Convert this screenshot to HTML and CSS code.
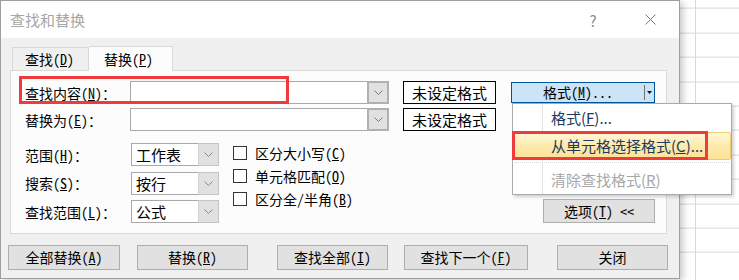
FILE: index.html
```html
<!DOCTYPE html>
<html lang="zh-CN">
<head>
<meta charset="utf-8">
<title>查找和替换</title>
<link rel="stylesheet" href="styles.css">
</head>
<body>
<div class="dialog">
  <div class="titlebar">
    <span class="title">查找和替换</span>
    <span class="help">?</span>
    <span class="close"><svg width="11" height="11" viewBox="0 0 11 11"><path d="M0.5 0.5 L10.5 10.5 M10.5 0.5 L0.5 10.5" stroke="#7a7a7a" stroke-width="1" fill="none"/></svg></span>
  </div>
  <div class="content">
    <div class="tabs">
      <div class="tab">查找(<u>D</u>)</div>
      <div class="tab active">替换(<u>P</u>)</div>
    </div>
    <div class="panel">
      <div class="row">
        <span class="label">查找内容(<u>N</u>)：</span>
        <div class="combo wide"><span class="combo-text"></span><span class="arrow"><svg width="9" height="5" viewBox="0 0 9 5"><path d="M0.5 0.5 L4.5 4.5 L8.5 0.5" stroke="#7a7a7a" fill="none"/></svg></span></div>
        <div class="fmt-btn">未设定格式</div>
        <div class="split">
          <span class="split-main">格式(<u>M</u>)...</span>
          <span class="split-sep"></span>
          <span class="split-arrow"><svg width="5" height="3" viewBox="0 0 5 3"><path d="M0 0 H5 L2.5 3 Z" fill="#111"/></svg></span>
        </div>
      </div>
      <div class="row row-2">
        <span class="label">替换为(<u>E</u>)：</span>
        <div class="combo wide"><span class="combo-text"></span><span class="arrow"><svg width="9" height="5" viewBox="0 0 9 5"><path d="M0.5 0.5 L4.5 4.5 L8.5 0.5" stroke="#7a7a7a" fill="none"/></svg></span></div>
        <div class="fmt-btn">未设定格式</div>
      </div>
      <div class="options">
        <div class="opt-col">
          <div class="opt-row">
            <span class="label opt-label">范围(<u>H</u>)：</span>
            <div class="combo small"><span class="combo-text">工作表</span><span class="arrow"><svg width="9" height="5" viewBox="0 0 9 5"><path d="M0.5 0.5 L4.5 4.5 L8.5 0.5" stroke="#8a8a8a" fill="none"/></svg></span></div>
          </div>
          <div class="opt-row">
            <span class="label opt-label">搜索(<u>S</u>)：</span>
            <div class="combo small"><span class="combo-text">按行</span><span class="arrow"><svg width="9" height="5" viewBox="0 0 9 5"><path d="M0.5 0.5 L4.5 4.5 L8.5 0.5" stroke="#8a8a8a" fill="none"/></svg></span></div>
          </div>
          <div class="opt-row">
            <span class="label opt-label">查找范围(<u>L</u>)：</span>
            <div class="combo small"><span class="combo-text">公式</span><span class="arrow"><svg width="9" height="5" viewBox="0 0 9 5"><path d="M0.5 0.5 L4.5 4.5 L8.5 0.5" stroke="#8a8a8a" fill="none"/></svg></span></div>
          </div>
        </div>
        <div class="checks">
          <div class="check"><span class="box"></span><span>区分大小写(<u>C</u>)</span></div>
          <div class="check"><span class="box"></span><span>单元格匹配(<u>O</u>)</span></div>
          <div class="check"><span class="box"></span><span>区分全/半角(<u>B</u>)</span></div>
        </div>
        <div class="btn opt-btn">选项(<u>T</u>) &lt;&lt;</div>
      </div>
    </div>
    <div class="actions">
      <div class="btn act act-1">全部替换(<u>A</u>)</div>
      <div class="btn act act-2">替换(<u>R</u>)</div>
      <div class="btn act act-3">查找全部(<u>I</u>)</div>
      <div class="btn act act-4">查找下一个(<u>F</u>)</div>
      <div class="btn act act-5">关闭</div>
    </div>
  </div>
</div>

<div class="menu">
  <div class="menu-item">格式(<u>F</u>)...</div>
  <div class="menu-item hot">从单元格选择格式(<u>C</u>)...</div>
  <div class="menu-sep"></div>
  <div class="menu-item disabled">清除查找格式(<u>R</u>)</div>
</div>

<div class="mark mark-find"></div>
<div class="mark mark-item"></div>
</body>
</html>
```

FILE: styles.css
```css
html, body {
  margin: 0;
  padding: 0;
  width: 739px;
  height: 280px;
  overflow: hidden;
}

body {
  position: relative;
  background-color: #ffffff;
  background-image:
    linear-gradient(to right, transparent 695px, #d9d9d9 695px, #d9d9d9 696px, transparent 696px),
    repeating-linear-gradient(to bottom, transparent 0, transparent 23.4px, #d9d9d9 23.4px, #d9d9d9 24.4px);
  background-position: 0 0, 0 -15.4px;
  font-family: "Noto Sans Mono CJK SC", "Noto Sans CJK SC", sans-serif;
  color: #000;
}

u {
  text-decoration: underline;
  text-underline-offset: 1px;
}

/* ---------- dialog ---------- */
.dialog {
  width: 680px;
  height: 279px;
  box-sizing: border-box;
  border: 1px solid #9e9e9e;
  background: #f0f0f0;
  box-shadow: 3px 2px 7px rgba(0, 0, 0, 0.22);
  display: flex;
  flex-direction: column;
}

.titlebar {
  height: 37px;
  flex: none;
  background: #ffffff;
  display: flex;
  align-items: center;
  padding: 0 18px 0 9px;
}

.title {
  font-family: "Noto Sans CJK SC", sans-serif;
  font-size: 15px;
  color: #a6a6a6;
  line-height: 20px;
  margin-top: 1px;
}

.help {
  margin-left: auto;
  width: 14px;
  text-align: center;
  font-family: "Noto Sans CJK SC", sans-serif;
  font-size: 15px;
  color: #8c8c8c;
  margin-right: 39px;
  margin-top: 1px;
}

.close {
  width: 22px;
  height: 11px;
  display: flex;
  justify-content: center;
}

.content {
  flex: 1;
  padding: 8px 0 0 0;
}

/* ---------- tabs ---------- */
.tabs {
  display: flex;
  align-items: flex-end;
  height: 24px;
  padding-left: 11px;
}

.tab {
  box-sizing: border-box;
  height: 23px;
  width: 77px;
  border: 1px solid #d9d9d9;
  border-bottom: none;
  font-size: 14px;
  line-height: 22px;
  padding-left: 12px;
  background: #f0f0f0;
}

.tab.active {
  height: 25px;
  width: 84px;
  margin-bottom: -1px;
  position: relative;
  z-index: 1;
  background: #fcfcfc;
  padding-left: 15px;
  line-height: 24px;
  border-left: none;
}

/* ---------- panel ---------- */
.panel {
  box-sizing: border-box;
  margin-left: 9px;
  width: 657px;
  height: 164px;
  border: 1px solid #d9d9d9;
  background: #fcfcfc;
  padding: 10px 11px 0 14px;
}

.row {
  display: flex;
  align-items: center;
  height: 23px;
}

.row-2 {
  margin-top: 4px;
}

.label {
  width: 105px;
  flex: none;
  font-size: 14px;
  line-height: 20px;
  white-space: nowrap;
}

.opt-label {
  width: 106px;
}

.combo {
  box-sizing: border-box;
  display: flex;
  height: 23px;
  border: 1px solid #a9a9a9;
  background: #ffffff;
  flex: none;
}

.combo.wide {
  width: 259px;
}

.combo.small {
  width: 88px;
}

.combo-text {
  flex: 1;
  font-size: 15px;
  line-height: 21px;
  padding-left: 4px;
  white-space: nowrap;
}

.arrow {
  box-sizing: border-box;
  width: 21px;
  background: #e1e1e1;
  border: 1px solid #c4c4c4;
  margin: -1px -1px -1px 0;
  border-left: 1px solid #d0d0d0;
  display: flex;
  align-items: center;
  justify-content: center;
}

.combo.wide .arrow {
  width: 22px;
  border: 2px solid #b0b0b0;
  margin: -1px -1px -1px 0;
}

.fmt-btn {
  box-sizing: border-box;
  margin-left: 14px;
  width: 93px;
  height: 23px;
  border: 1px solid #000;
  background: #ffffff;
  font-size: 15px;
  line-height: 21px;
  text-align: center;
  flex: none;
}

.split {
  box-sizing: border-box;
  margin-left: 15px;
  width: 144px;
  height: 21px;
  border: 1px solid #005499;
  background: #cce4f7;
  display: flex;
  align-items: center;
  flex: none;
}

.split-main {
  flex: 1;
  text-align: center;
  font-size: 14px;
  line-height: 19px;
  white-space: nowrap;
}

.split-sep {
  width: 1px;
  height: 15px;
  background: #707070;
}

.split-arrow {
  width: 9px;
  display: flex;
  justify-content: center;
}

/* ---------- options ---------- */
.options {
  display: flex;
}

.opt-col {
  width: 194px;
  padding-top: 12px;
  flex: none;
}

.opt-row {
  display: flex;
  align-items: center;
  height: 23px;
  margin-bottom: 5.5px;
}

.checks {
  margin-left: 14px;
  padding-top: 10px;
}

.check {
  display: flex;
  align-items: center;
  height: 23px;
  font-size: 14px;
  line-height: 20px;
  white-space: nowrap;
}

.box {
  box-sizing: border-box;
  width: 14px;
  height: 14px;
  border: 1px solid #333333;
  background: #ffffff;
  margin-right: 8px;
  flex: none;
}

.btn {
  box-sizing: border-box;
  border: 1px solid #adadad;
  background: #e1e1e1;
  font-size: 14px;
  text-align: center;
  white-space: nowrap;
}

.opt-btn {
  margin-left: auto;
  margin-top: 68px;
  width: 112px;
  height: 24px;
  line-height: 22px;
  flex: none;
}

/* ---------- bottom buttons ---------- */
.actions {
  display: flex;
  margin-top: 11px;
  padding-left: 7px;
}

.act {
  height: 25px;
  line-height: 23px;
  width: 111px;
}

.act-1 { width: 112px; }
.act-2 { margin-left: 17px; }
.act-3 { margin-left: 29px; }
.act-4 { margin-left: 16px; width: 124px; }
.act-5 { margin-left: 29px; }

/* ---------- dropdown menu ---------- */
.menu {
  position: absolute;
  left: 512px;
  top: 103px;
  width: 220px;
  height: 92px;
  box-sizing: border-box;
  border: 1px solid #a7abb0;
  background: #ffffff;
  box-shadow: 2px 2px 3px rgba(0, 0, 0, 0.18);
  font-family: "Noto Sans CJK SC", sans-serif;
  font-size: 15px;
  color: #1e395b;
  z-index: 5;
}

.menu::before {
  content: "";
  position: absolute;
  left: 29px;
  top: 0;
  bottom: 0;
  width: 1px;
  background: #e2e3e3;
}

.menu-item {
  position: relative;
  height: 28px;
  line-height: 28px;
  padding-left: 38px;
  box-sizing: border-box;
  white-space: nowrap;
}

.menu-item.hot {
  background: linear-gradient(to bottom, #fef7d9 0%, #fdebb0 45%, #fce294 100%);
  border: 1px solid #eccb73;
  border-radius: 2px;
  line-height: 26px;
  padding-left: 37px;
  margin-right: 0;
}

.menu-sep {
  height: 2px;
  margin: 0 2px 4px 2px;
  border-bottom: 1px dotted #d8d8d8;
}

.menu-item.disabled {
  color: #a7a7a7;
  height: 26px;
  line-height: 26px;
}

/* ---------- red annotation boxes ---------- */
.mark {
  position: absolute;
  box-sizing: border-box;
  border: 3px solid #ef3b3b;
  z-index: 10;
}

.mark-find {
  left: 19px;
  top: 76px;
  width: 270px;
  height: 28px;
}

.mark-item {
  left: 512px;
  top: 131px;
  width: 196px;
  height: 29px;
}
```
